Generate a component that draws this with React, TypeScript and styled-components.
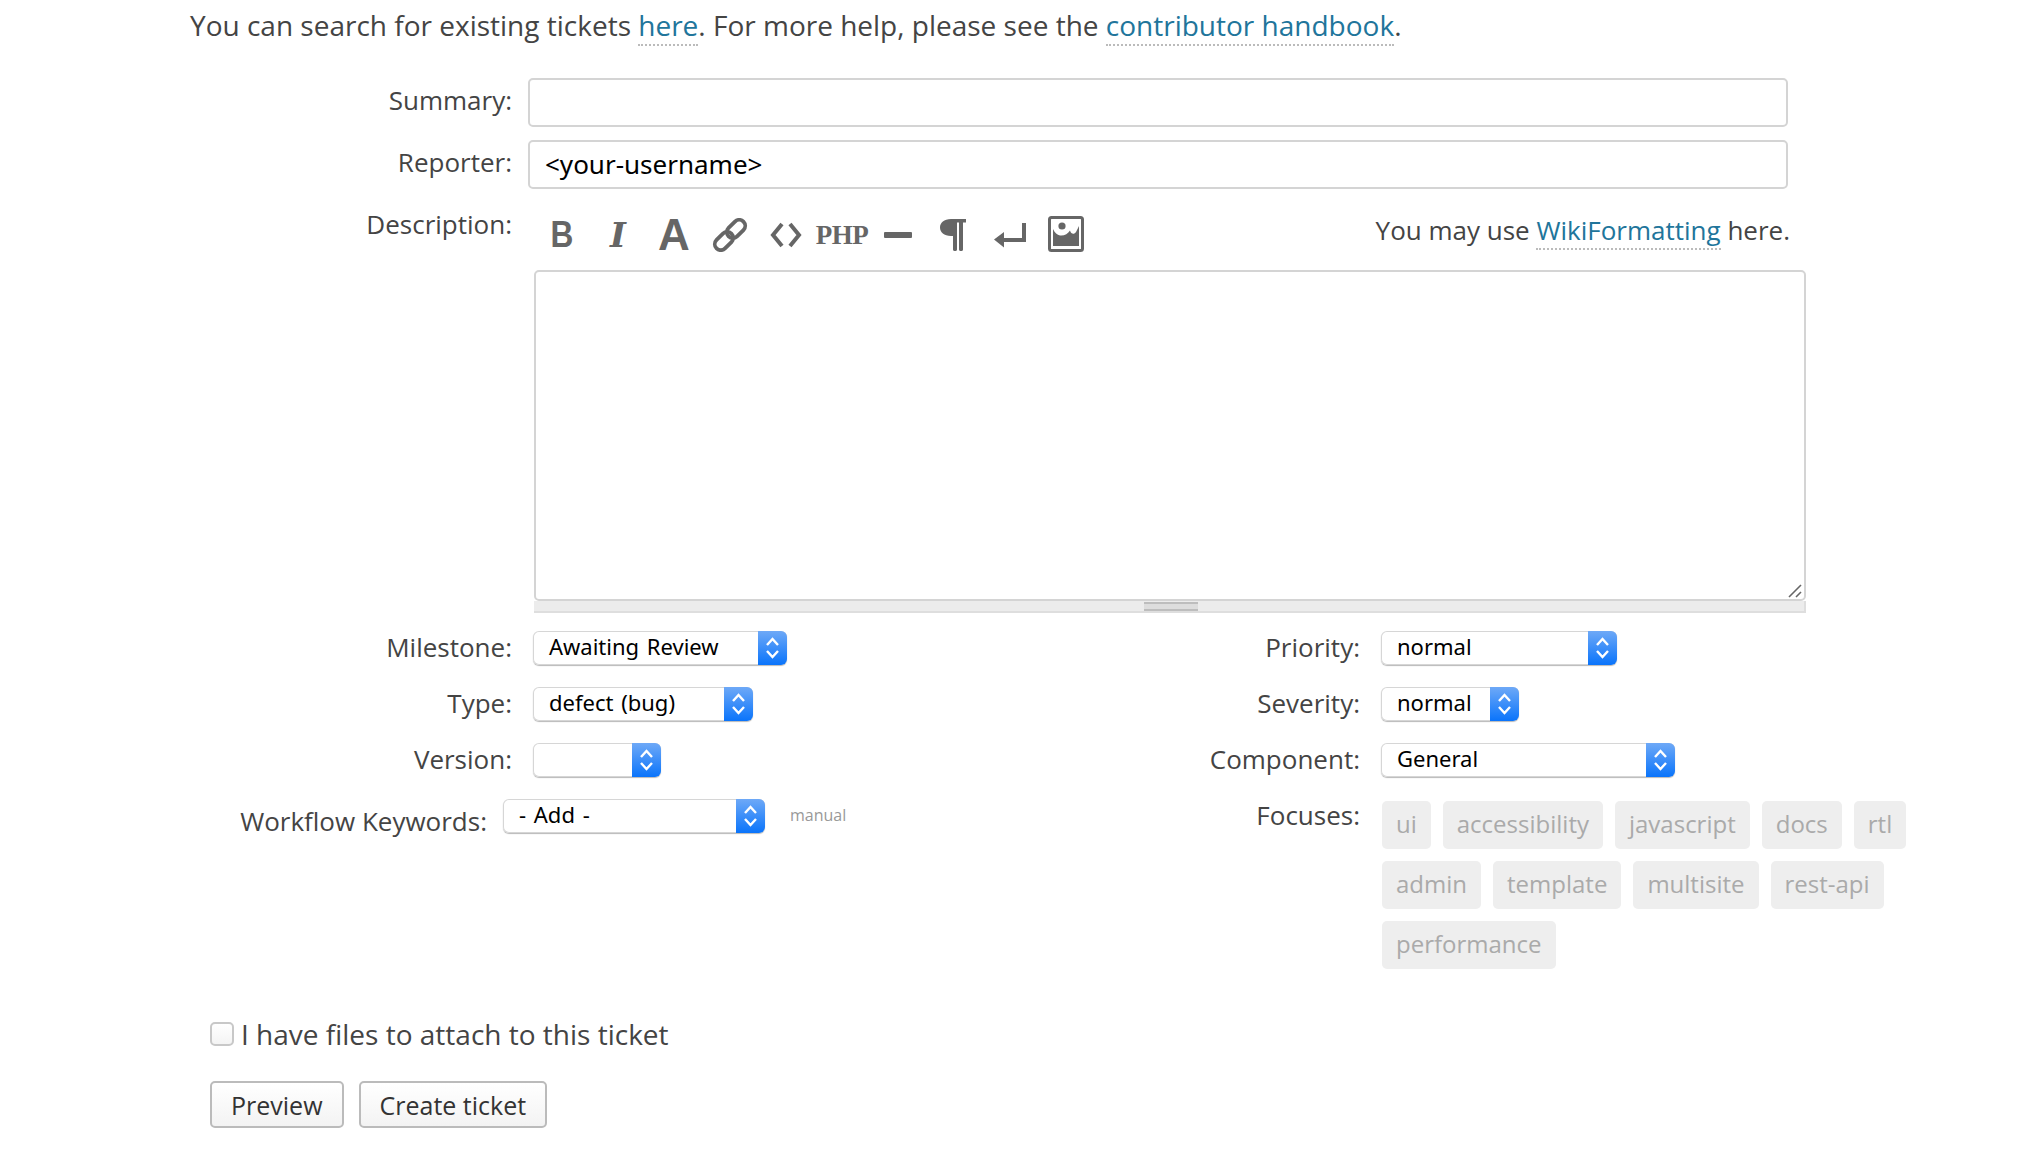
import styled, { createGlobalStyle } from "styled-components";

const GlobalStyle = createGlobalStyle`
  html, body {
    margin: 0;
    padding: 0;
    background: #fff;
  }

  body {
    font-family: "Open Sans", "Noto Sans", sans-serif;
    font-size: 26px;
    color: #444;
  }
`;

const SELECT_FONT = `"Noto Sans", "Open Sans", sans-serif`;

const Page = styled.div`
  width: 2020px;
  height: 1160px;
  overflow: hidden;
`;

const Intro = styled.p`
  margin: 0;
  padding-left: 190px;
  height: 78px;
  font-size: 28px;
  line-height: 50px;
`;

const WikiLink = styled.a`
  color: #21759b;
  text-decoration: none;
  border-bottom: 2px dotted #bbb;
`;

const FieldRow = styled.div`
  display: flex;
  align-items: flex-start;
  margin-bottom: 13px;
`;

const RowLabel = styled.label`
  flex: none;
  width: 512px;
  text-align: right;
  line-height: 44px;
`;

const TextField = styled.input`
  box-sizing: border-box;
  width: 1260px;
  height: 49px;
  margin-left: 16px;
  padding: 0 15px 2px;
  border: 2px solid #d4d4d4;
  border-radius: 5px;
  background: #fff;
  font-family: ${SELECT_FONT};
  font-size: 26px;
  color: #000;
  outline: none;
`;

const ToolbarRow = styled.div`
  box-sizing: border-box;
  display: flex;
  align-items: center;
  width: 1256px;
  height: 68px;
  margin-left: 22px;
  padding-bottom: 2px;
`;

const ToolButton = styled.span`
  flex: none;
  display: flex;
  align-items: center;
  justify-content: center;
  width: 56px;
  height: 56px;
  color: #666;
`;

const LetterIcon = styled.span<{ $serif?: boolean; $italic?: boolean; $size: number; $squeeze?: number }>`
  display: inline-block;
  font-family: ${(p) => (p.$serif ? `"DejaVu Serif", serif` : `"Liberation Sans", sans-serif`)};
  font-size: ${(p) => p.$size}px;
  font-style: ${(p) => (p.$italic ? "italic" : "normal")};
  font-weight: 700;
  line-height: 1;
  transform: scaleX(${(p) => p.$squeeze ?? 1});
`;

const PhpIcon = styled.span`
  font-family: "Liberation Serif", serif;
  font-size: 27px;
  font-weight: 700;
  letter-spacing: -0.5px;
  line-height: 1;
`;

const ImageGlyph = styled.svg`
  margin-bottom: 2px;
`;

const FormatHint = styled.span`
  margin-left: auto;
  margin-bottom: 11px;
  line-height: 1;
`;

const EditorWrap = styled.div`
  width: 1272px;
  margin-left: 534px;
`;

const Editor = styled.div`
  position: relative;
  box-sizing: border-box;
  height: 331px;
  border: 2px solid #d4d4d4;
  border-radius: 5px;
`;

const ResizeHandle = styled.svg`
  position: absolute;
  right: 2px;
  bottom: 1px;
`;

const GripBar = styled.div`
  display: flex;
  align-items: center;
  justify-content: center;
  box-sizing: border-box;
  height: 12px;
  padding-left: 4px;
  background: #ececec;
  border-bottom: 2px solid #dedede;
  border-right: 2px solid #dedede;
`;

const GripLines = styled.span`
  width: 54px;
  height: 5px;
  border-top: 2px solid #bdbdbd;
  border-bottom: 2px solid #bdbdbd;
  background: #ddd;
`;

const Properties = styled.div`
  display: grid;
  grid-template-columns: 1100px 1fr;
  margin-top: 18px;
`;

const PropColumn = styled.div`
  display: flex;
  flex-direction: column;
  gap: 22px;
`;

const PropRow = styled.div`
  display: flex;
  align-items: flex-start;
`;

const PropLabel = styled.label<{ $width: number; $drop?: number }>`
  flex: none;
  box-sizing: border-box;
  width: ${(p) => p.$width}px;
  padding-top: ${(p) => p.$drop ?? 0}px;
  text-align: right;
  line-height: 33px;
`;

const SelectBox = styled.div<{ $width: number; $gap?: number }>`
  flex: none;
  display: flex;
  justify-content: space-between;
  box-sizing: border-box;
  width: ${(p) => p.$width}px;
  height: 34px;
  margin-left: ${(p) => p.$gap ?? 22}px;
  border-radius: 6px;
  background: #fff;
  box-shadow: 0 0 0 1px #d6d6d6 inset, 0 1px 1px rgba(0, 0, 0, 0.28);
  overflow: hidden;
`;

const SelectValue = styled.span`
  padding-left: 16px;
  font-family: ${SELECT_FONT};
  font-size: 22px;
  line-height: 31px;
  word-spacing: 2px;
  color: #000;
`;

const SelectArrow = styled.span`
  flex: none;
  display: flex;
  align-items: center;
  justify-content: center;
  width: 29px;
  height: 34px;
  background: linear-gradient(#6ea9f7, #0a74fb);
`;

const ManualNote = styled.span`
  margin-left: 25px;
  font-size: 16px;
  line-height: 32px;
  color: #999;
`;

const TagList = styled.div`
  display: flex;
  flex-wrap: wrap;
  gap: 12px;
  width: 560px;
  margin: 2px 0 0 22px;
`;

const Tag = styled.span`
  box-sizing: border-box;
  height: 48px;
  padding: 0 14px;
  border-radius: 5px;
  background: #eee;
  color: #aaa;
  font-size: 24px;
  line-height: 45px;
`;

const AttachRow = styled.label`
  display: flex;
  align-items: center;
  gap: 7px;
  margin: 50px 0 0 210px;
  height: 30px;
  font-size: 28px;
`;

const CheckBox = styled.span`
  box-sizing: border-box;
  width: 24px;
  height: 24px;
  border: 2px solid #c8c8c8;
  border-radius: 5px;
  background: linear-gradient(#fff, #f4f4f4);
`;

const Actions = styled.div`
  display: flex;
  gap: 15px;
  margin: 32px 0 0 210px;
`;

const ActionButton = styled.button`
  box-sizing: border-box;
  height: 47px;
  padding: 0 19px;
  border: 2px solid #bbb;
  border-radius: 5px;
  background: linear-gradient(#fff, #f3f3f3);
  font-family: "Open Sans", sans-serif;
  font-size: 25px;
  color: #333;
`;

const Arrows = () => (
  <svg width="15" height="26" viewBox="0 0 15 26" fill="none" stroke="#fff" strokeWidth="2.4">
    <path d="M2 10 7.5 4 13 10" />
    <path d="M2 16 7.5 22 13 16" />
  </svg>
);

const Select = ({ value, width, gap }: { value: string; width: number; gap?: number }) => (
  <SelectBox $width={width} $gap={gap}>
    <SelectValue>{value}</SelectValue>
    <SelectArrow>
      <Arrows />
    </SelectArrow>
  </SelectBox>
);

const ChainIcon = () => (
  <svg width="36" height="34" viewBox="0 0 36 34" fill="none" stroke="#666" strokeWidth="3.8">
    <g transform="rotate(-45 18 17)">
      <rect x="-1" y="11" width="21" height="12" rx="6" />
      <rect x="16" y="11" width="21" height="12" rx="6" />
    </g>
  </svg>
);

const CodeIcon = () => (
  <svg width="32" height="26" viewBox="0 0 32 26" fill="none" stroke="#666" strokeWidth="4">
    <path d="M12 2 3 13 12 24" />
    <path d="M20 2 29 13 20 24" />
  </svg>
);

const DashIcon = () => (
  <svg width="28" height="6" viewBox="0 0 28 6">
    <rect width="28" height="6" rx="1" fill="#666" />
  </svg>
);

const PilcrowIcon = () => (
  <svg width="28" height="32" viewBox="0 0 28 32" fill="#666">
    <path d="M11 0H26V3.5H23V30.5C23 32.5 19 32.5 19 30.5V3.5H17V30.5C17 32.5 13 32.5 13 30.5V17H11C4 17 0 13 0 8.5S4 0 11 0Z" />
  </svg>
);

const ReturnIcon = () => (
  <svg width="32" height="26" viewBox="0 0 32 26" fill="#666">
    <path d="M28 1H32V20H10V25.5L0 17.5 10 10V16H28Z" />
  </svg>
);

const ImageIcon = () => (
  <ImageGlyph width="36" height="36" viewBox="0 0 36 36">
    <rect x="1.5" y="1.5" width="33" height="33" rx="2" fill="#fff" stroke="#666" strokeWidth="3" />
    <path d="M5 13C7 17 9 19 12 19.5C16 20 20 18 22 14.5C23 18 26 19 28 16L31 10V30H5Z" fill="#666" />
    <circle cx="14" cy="10" r="3.6" fill="#666" />
  </ImageGlyph>
);

const FOCUSES = [
  "ui",
  "accessibility",
  "javascript",
  "docs",
  "rtl",
  "admin",
  "template",
  "multisite",
  "rest-api",
  "performance",
];

const App = () => {
  return (
    <Page>
      <GlobalStyle />
      <Intro>
        You can search for existing tickets <WikiLink href="#">here</WikiLink>. For more help, please see the{" "}
        <WikiLink href="#">contributor handbook</WikiLink>.
      </Intro>

      <FieldRow>
        <RowLabel>Summary:</RowLabel>
        <TextField />
      </FieldRow>
      <FieldRow>
        <RowLabel>Reporter:</RowLabel>
        <TextField defaultValue="<your-username>" />
      </FieldRow>

      <FieldRow style={{ marginBottom: 0 }}>
        <RowLabel>Description:</RowLabel>
        <ToolbarRow>
          <ToolButton><LetterIcon $size={36} $squeeze={0.88}>B</LetterIcon></ToolButton>
          <ToolButton><LetterIcon $size={34} $serif $italic>I</LetterIcon></ToolButton>
          <ToolButton><LetterIcon $size={44}>A</LetterIcon></ToolButton>
          <ToolButton><ChainIcon /></ToolButton>
          <ToolButton><CodeIcon /></ToolButton>
          <ToolButton><PhpIcon>PHP</PhpIcon></ToolButton>
          <ToolButton><DashIcon /></ToolButton>
          <ToolButton><PilcrowIcon /></ToolButton>
          <ToolButton><ReturnIcon /></ToolButton>
          <ToolButton><ImageIcon /></ToolButton>
          <FormatHint>
            You may use <WikiLink href="#">WikiFormatting</WikiLink> here.
          </FormatHint>
        </ToolbarRow>
      </FieldRow>

      <EditorWrap>
        <Editor>
          <ResizeHandle width="14" height="14" viewBox="0 0 14 14" stroke="#666" strokeWidth="1.6">
            <path d="M1 13 13 1" />
            <path d="M8 13 13 8" />
          </ResizeHandle>
        </Editor>
        <GripBar>
          <GripLines />
        </GripBar>
      </EditorWrap>

      <Properties>
        <PropColumn>
          <PropRow>
            <PropLabel $width={512}>Milestone:</PropLabel>
            <Select value="Awaiting Review" width={254} gap={21} />
          </PropRow>
          <PropRow>
            <PropLabel $width={512}>Type:</PropLabel>
            <Select value="defect (bug)" width={220} gap={21} />
          </PropRow>
          <PropRow>
            <PropLabel $width={512}>Version:</PropLabel>
            <Select value="" width={128} gap={21} />
          </PropRow>
          <PropRow>
            <PropLabel $width={487} $drop={6}>Workflow Keywords:</PropLabel>
            <Select value="- Add -" width={262} gap={16} />
            <ManualNote>manual</ManualNote>
          </PropRow>
        </PropColumn>

        <PropColumn>
          <PropRow>
            <PropLabel $width={260}>Priority:</PropLabel>
            <Select value="normal" width={236} gap={21} />
          </PropRow>
          <PropRow>
            <PropLabel $width={260}>Severity:</PropLabel>
            <Select value="normal" width={138} gap={21} />
          </PropRow>
          <PropRow>
            <PropLabel $width={260}>Component:</PropLabel>
            <Select value="General" width={294} gap={21} />
          </PropRow>
          <PropRow>
            <PropLabel $width={260}>Focuses:</PropLabel>
            <TagList>
              {FOCUSES.map((name) => (
                <Tag key={name}>{name}</Tag>
              ))}
            </TagList>
          </PropRow>
        </PropColumn>
      </Properties>

      <AttachRow>
        <CheckBox />I have files to attach to this ticket
      </AttachRow>
      <Actions>
        <ActionButton>Preview</ActionButton>
        <ActionButton>Create ticket</ActionButton>
      </Actions>
    </Page>
  );
};

export default App;
